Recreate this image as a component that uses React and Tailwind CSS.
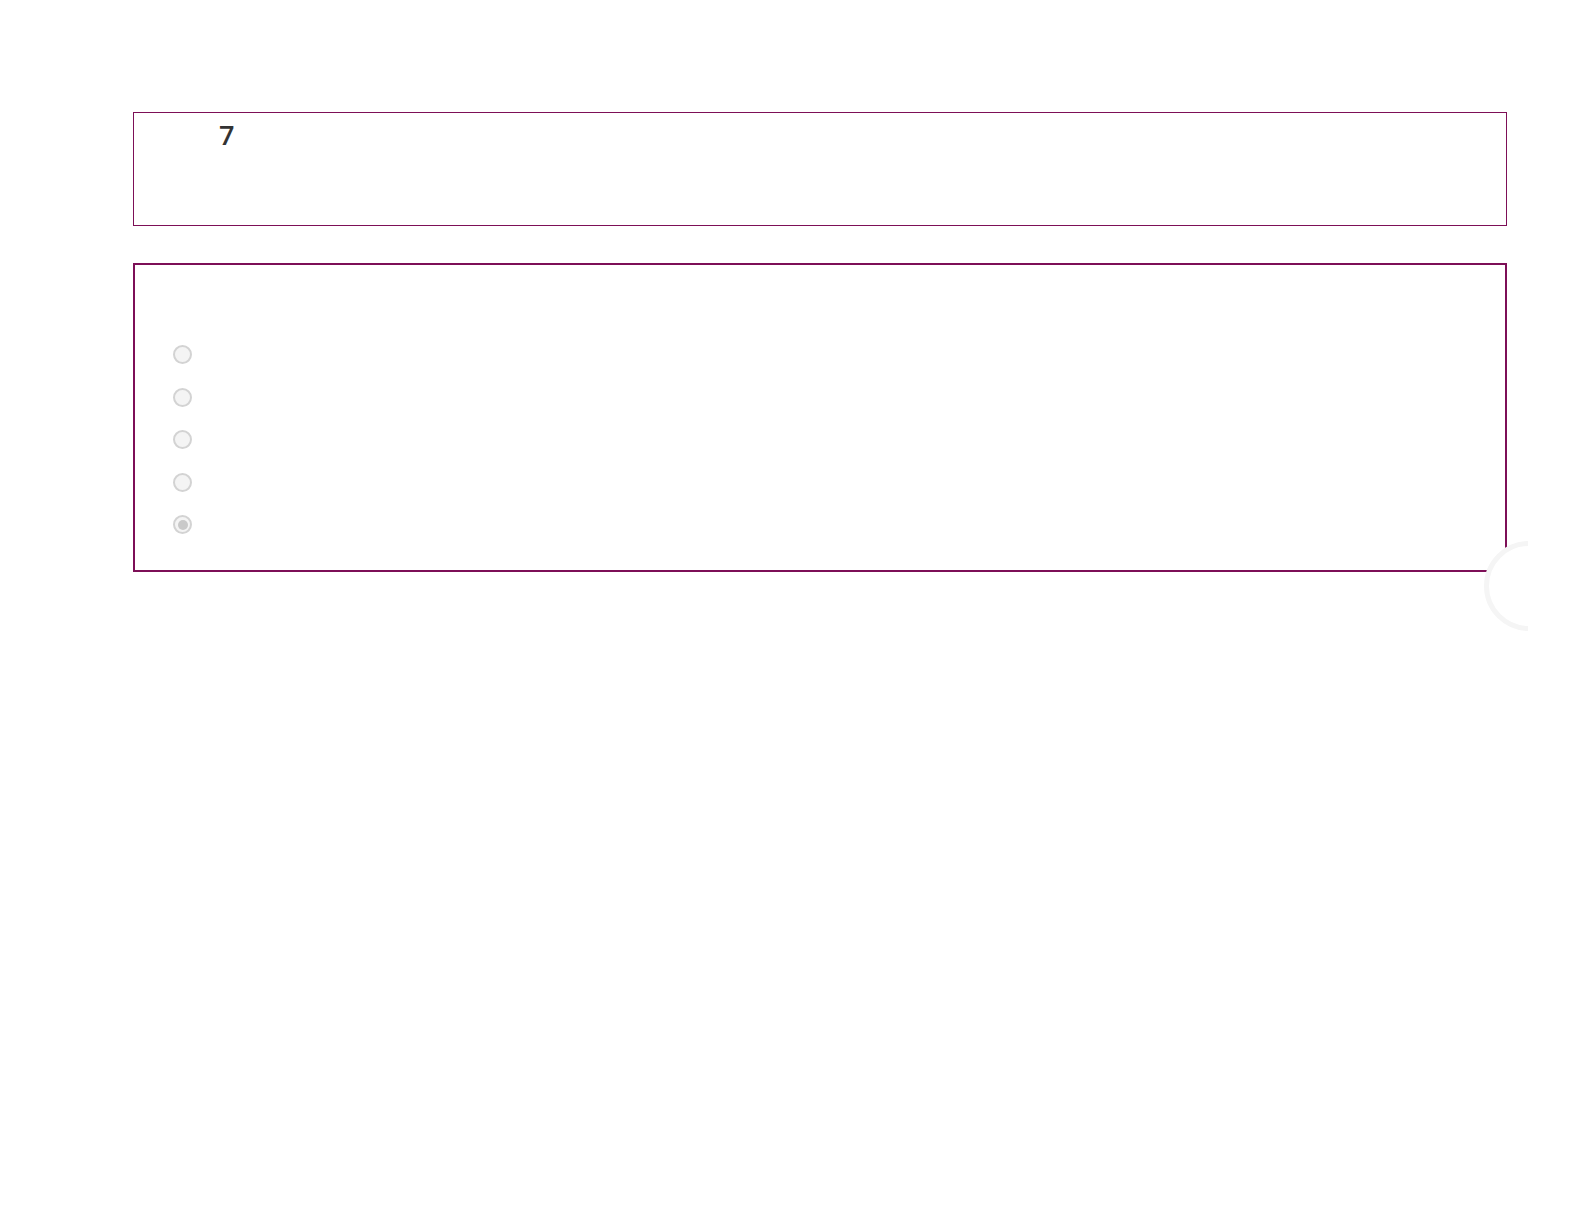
import React from "react";

const options = [
  { id: "a", checked: false },
  { id: "b", checked: false },
  { id: "c", checked: false },
  { id: "d", checked: false },
  { id: "e", checked: true },
];

function Radio({ checked }) {
  return (
    <span className="flex h-[19px] w-[19px] items-center justify-center rounded-full border-2 border-[#d3d3d3] bg-[#f4f4f4]">
      {checked && <span className="h-[10px] w-[10px] rounded-full bg-[#c9c9c9]" />}
    </span>
  );
}

export default function App() {
  return (
    <div className="min-h-[1222px] w-full bg-white font-['Open_Sans','Lato',sans-serif] text-[#333]">
      <div className="ml-[133px] w-[1374px] pt-[112px]">
        {/* question header */}
        <div className="h-[114px] border-[1.5px] border-[#7d0f57] pl-[85px] pt-[5px]">
          <span className="text-[27px] font-semibold leading-[34px]">7</span>
        </div>

        {/* answers */}
        <div className="relative mt-[37px] h-[309px] border-2 border-[#7d0f57] pl-[38px] pt-[80px]">
          <div className="flex flex-col gap-[23.5px]">
            {options.map((o) => (
              <label key={o.id} className="flex h-[19px] items-center">
                <Radio checked={o.checked} />
              </label>
            ))}
          </div>

          {/* loading ring half hidden at the edge */}
          <div className="absolute left-[1349px] top-[276px] h-[92px] w-[44px] overflow-hidden">
            <div className="h-[90px] w-[90px] rounded-full border-[5px] border-[#f5f5f5] bg-white" />
          </div>
        </div>
      </div>
    </div>
  );
}
